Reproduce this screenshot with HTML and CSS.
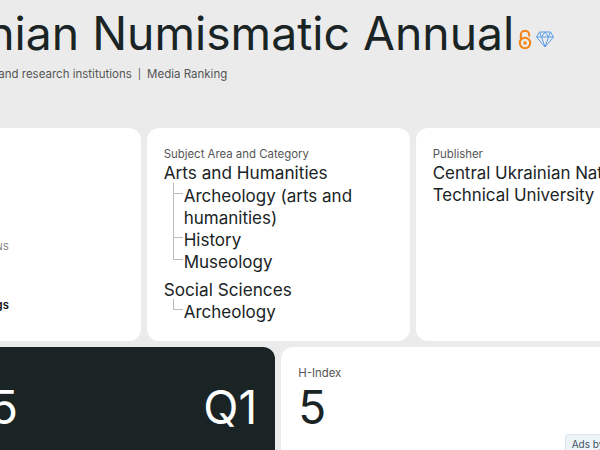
FILE: index.html
```html
<!DOCTYPE html>
<html lang="en">
<head>
    <meta charset="UTF-8">
    <meta name="viewport" content="width=device-width, initial-scale=1.0">
    <title>Ukrainian Numismatic Annual</title>
    <link rel="stylesheet" href="styles.css">
</head>

<body>
    <div class="page">
        <header class="head">
            <div class="title-row">
                <h1>Ukrainian Numismatic Annual</h1>
                <svg class="oa" viewBox="0 0 14 20" width="14" height="20">
                    <circle cx="7" cy="13" r="5.2" fill="none" stroke="#f68212" stroke-width="2"/>
                    <circle cx="7" cy="13" r="1.7" fill="#f68212"/>
                    <path d="M2.8 9V5a4.2 4.2 0 0 1 8.4 0V6.5" fill="none" stroke="#f68212" stroke-width="2"/>
                </svg>
                <svg class="gem" viewBox="0 0 18 17" width="18" height="17">
                    <path d="M3.5 1h11L17.5 6 9 16 .5 6z M.5 6h17 M3.5 1 5.5 6 9 16 12.5 6 14.5 1 M5.5 6 9 1l3.5 5" fill="none" stroke="#5b9ee6" stroke-width="1"/>
                </svg>
            </div>
            <p class="sub">Ukraine - Universities and research institutions<span class="pipe">|</span>Media Ranking</p>
        </header>

        <section class="cards">
            <div class="card third">
                <div class="inst-name">SCIMAGO INSTITUTIONS</div>
                <div class="inst-link">Institutions Rankings</div>
            </div>

            <div class="card third">
                <div class="label">Subject Area and Category</div>
                <div class="area">Arts and Humanities</div>
                <ul class="tree">
                    <li>Archeology (arts and humanities)</li>
                    <li>History</li>
                    <li>Museology</li>
                </ul>
                <div class="area second">Social Sciences</div>
                <ul class="tree">
                    <li>Archeology</li>
                </ul>
            </div>

            <div class="card third">
                <div class="label">Publisher</div>
                <div class="area publisher">Central Ukrainian National Technical University</div>
            </div>

            <div class="card half dark">
                <div class="label">SJR 2025</div>
                <div class="stat-row">
                    <span class="stat sjr">0.105</span>
                    <span class="stat">Q1</span>
                </div>
            </div>

            <div class="card half">
                <div class="label">H-Index</div>
                <div class="stat-row">
                    <span class="stat">5</span>
                </div>
            </div>
        </section>
    </div>

    <div class="ads-tag">Ads by Google</div>
</body>
</html>
```

FILE: styles.css
```css
* {
    box-sizing: border-box;
}

html, body {
    height: 100%;
}

body {
    margin: 0;
    width: 600px;
    height: 450px;
    overflow: hidden;
    background-color: #ebebeb;
    color: #1a2425;
    font-family: Inter, "Liberation Sans", sans-serif;
}

.page {
    width: 801px;
    margin-left: -122.3px;
}

.head {
    height: 128px;
    padding-top: 6px;
}

.title-row {
    display: flex;
    align-items: flex-start;
    margin-left: -5px;
}

h1 {
    margin: 0;
    font-size: 46.3px;
    font-weight: 400;
    line-height: 55px;
    white-space: nowrap;
}

.oa {
    margin: 24px 0 0 4px;
}

.gem {
    margin: 25px 0 0 4px;
}

.sub {
    margin: 5px 0 0 0;
    font-size: 11.5px;
    line-height: 16px;
    color: #555;
    white-space: nowrap;
}

.pipe {
    margin: 0 6px;
    font-size: 10px;
}

.cards {
    display: grid;
    grid-template-columns: repeat(6, 1fr);
    gap: 6px;
}

.card {
    background-color: #fff;
    border-radius: 12px;
    padding: 19px 17px;
}

.third {
    grid-column: span 2;
    height: 213px;
}

.half {
    grid-column: span 3;
    height: 120px;
}

.dark {
    background-color: #1a2425;
    color: #fff;
}

.label {
    font-size: 11.4px;
    line-height: 14px;
    color: #555;
}

.dark .label {
    color: #ccc;
}

.area {
    margin-top: 1px;
    font-size: 17.2px;
    line-height: 22px;
}

.area.second {
    margin-top: 6px;
}

.area.publisher {
    font-size: 16.9px;
}

.tree {
    list-style: none;
    margin: 0.5px 0 0 9px;
    padding: 0;
    font-size: 17px;
    line-height: 22.1px;
}

.tree li {
    position: relative;
    padding-left: 11px;
}

.tree li::before {
    content: "";
    position: absolute;
    left: 0;
    top: -2px;
    width: 9px;
    height: 10px;
    border-left: 1px solid #bbb;
    border-bottom: 1px solid #bbb;
}

.tree li:not(:last-child)::after {
    content: "";
    position: absolute;
    left: 0;
    top: 0;
    bottom: 0;
    border-left: 1px solid #bbb;
}

.inst-name {
    margin-top: 94px;
    font-size: 9px;
    line-height: 12px;
    letter-spacing: 0.3px;
    color: #777;
}

.inst-link {
    margin-top: 45px;
    font-size: 11.3px;
    line-height: 14px;
    font-weight: 600;
    color: #111;
}

.stat-row {
    display: flex;
    justify-content: space-between;
    margin-top: -1px;
}

.stat {
    font-size: 46px;
    line-height: 56px;
}

.sjr {
    letter-spacing: 2.6px;
}

.dark .stat-row {
    padding-right: 1px;
}

.ads-tag {
    position: fixed;
    right: -48px;
    bottom: -4px;
    padding: 3px 6px;
    font-size: 10px;
    line-height: 12px;
    color: #456;
    background-color: #eef3f8;
    border: 1px solid #dde4ec;
    border-radius: 3px;
}
```
